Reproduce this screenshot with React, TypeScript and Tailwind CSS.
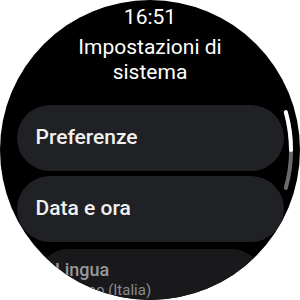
export default function App() {
  return (
    <div className="w-[300px] h-[300px] bg-white" style={{ fontFamily: "Roboto, 'Noto Sans', sans-serif" }}>
      <div className="relative w-[300px] h-[300px] rounded-full bg-black overflow-hidden flex flex-col items-center">
        {/* Clock */}
        <div className="pt-[5px] text-[21px] leading-[24px] text-white">16:51</div>

        {/* Title */}
        <h1 className="mt-[6px] text-center text-[21px] leading-[25px] text-white">
          Impostazioni di
          <br />
          sistema
        </h1>

        {/* Settings list */}
        <div className="mt-[20px] w-full flex flex-col items-center gap-[5px]">
          <div className="w-[267px] h-[66px] rounded-full bg-[#202124] flex items-center pl-[19px]">
            <span className="text-[21px] font-medium text-[#f1f1f1]">Preferenze</span>
          </div>
          <div className="w-[267px] h-[66px] rounded-full bg-[#202124] flex items-center pl-[19px]">
            <span className="text-[21px] font-medium text-[#f1f1f1]">Data e ora</span>
          </div>
          <div className="mt-[2px] w-[224px] h-[64px] rounded-[30px] bg-[#19191b] flex flex-col pl-[17px] pt-[10px]">
            <span className="text-[18px] leading-[22px] font-medium text-[#98989b]">Lingua</span>
            <span className="text-[15px] leading-[18px] text-[#8a8a8d]">Italiano (Italia)</span>
          </div>
        </div>

        {/* Curved scroll indicator */}
        <svg className="absolute inset-0" width="300" height="300" viewBox="0 0 300 300">
          <path d="M 285.8 112.1 A 141 141 0 0 1 285.8 187.9" fill="none" stroke="#6b6b6e" strokeWidth="4" strokeLinecap="round" />
          <path d="M 285.8 112.1 A 141 141 0 0 1 291 150" fill="none" stroke="#ffffff" strokeWidth="4" strokeLinecap="round" />
        </svg>
      </div>
    </div>
  );
}
